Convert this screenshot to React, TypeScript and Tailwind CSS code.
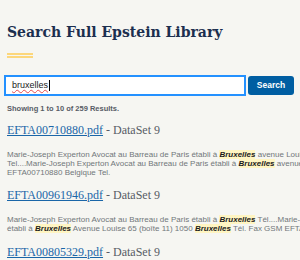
export default function App() {
  const hl = 'bg-[#fff5c2] font-bold italic text-[#1b1b1b]'

  return (
    <div className="h-[260px] w-[300px] overflow-hidden bg-[#f6f6f2] pt-[23px] pl-[7px]">
      <h1 className="whitespace-nowrap font-['DejaVu_Serif',serif] text-[14px] font-bold leading-[18px] text-[#1c2f4f]">
        Search Full Epstein Library
      </h1>
      <div className="mt-[12px] h-[5px] w-[26px] border-y-2 border-[#fcd77c]" />

      <div className="mt-[17px] -ml-[3px] flex w-[290px] gap-[2px]">
        <div className="flex h-[21px] flex-1 items-center border-2 border-[#2491ff] bg-white pl-[6px]">
          <span className="font-['Liberation_Sans',sans-serif] text-[9px] text-[#1b1b1b] underline decoration-wavy decoration-[#e5484d] decoration-1">
            bruxelles
          </span>
          <span className="ml-px h-[11px] w-px bg-black" />
        </div>
        <button className="mt-px h-[19px] w-[46px] rounded-[3px] bg-[#005ea2] font-['Liberation_Sans',sans-serif] text-[8.5px] font-bold text-white">
          Search
        </button>
      </div>

      <p className="mt-[8px] font-['Liberation_Sans',sans-serif] text-[7.5px] font-semibold leading-[10px] text-[#565c65]">
        Showing 1 to 10 of 259 Results.
      </p>

      <Result
        name="EFTA00710880.pdf"
        lines={[
          <>Marie-Joseph Experton Avocat au Barreau de Paris établi à <span className={hl}>Bruxelles</span> avenue Louise</>,
          <>Tel....Marie-Joseph Experton Avocat au Barreau de Paris établi à <span className={hl}>Bruxelles</span> avenue</>,
          <>EFTA00710880 Belgique Tel.</>,
        ]}
      />
      <Result
        name="EFTA00961946.pdf"
        lines={[
          <>Marie-Joseph Experton Avocat au Barreau de Paris établi à <span className={hl}>Bruxelles</span> Tél....Marie-</>,
          <>établi à <span className={hl}>Bruxelles</span> Avenue Louise 65 (boîte 11) 1050 <span className={hl}>Bruxelles</span> Tél. Fax GSM EFTA</>,
        ]}
      />
      <Result name="EFTA00805329.pdf" lines={[]} />
    </div>
  )
}

function Result({ name, lines }: { name: string; lines: React.ReactNode[] }) {
  return (
    <div className="mt-[8px]">
      <div className="whitespace-nowrap font-['Liberation_Serif',serif] text-[12px] leading-[16px]">
        <a href="#" className="text-[#1a66a8] underline">{name}</a>
        <span className="text-[#565c65]"> - DataSet 9</span>
      </div>
      {lines.length > 0 && (
        <div className="mt-[13px] mb-[10px] font-['Liberation_Sans',sans-serif] text-[8px] leading-[8.8px] text-[#71767a]">
          {lines.map((l, i) => (
            <div key={i} className="whitespace-nowrap">{l}</div>
          ))}
        </div>
      )}
    </div>
  )
}
